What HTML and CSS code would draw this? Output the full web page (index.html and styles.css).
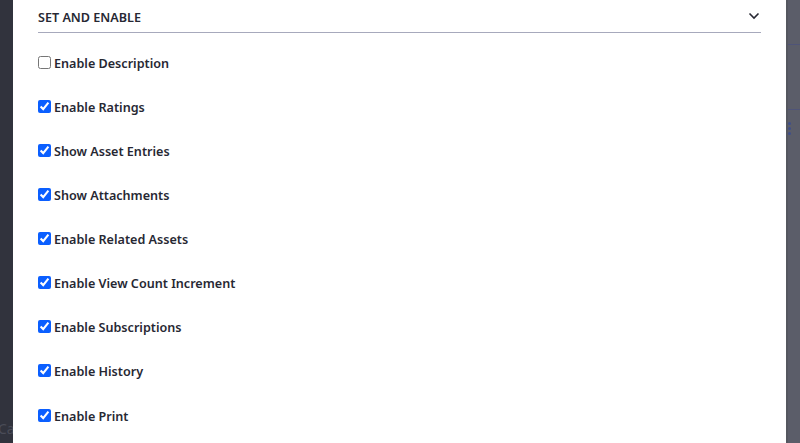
FILE: index.html
```html
<!DOCTYPE html>
<html>
<head>
<meta charset="utf-8">
<link rel="stylesheet" href="styles.css">
</head>
<body>
<div class="page">
  <div class="backdrop-left"><span class="ghost">Ca</span></div>
  <div class="modal">
    <div class="panel-header">
      <span class="panel-title">SET AND ENABLE</span>
      <svg class="chevron" width="12" height="8" viewBox="0 0 12 8"><path d="M1.5 1.5 L6 6 L10.5 1.5" fill="none" stroke="#272833" stroke-width="1.6"/></svg>
    </div>
    <div class="options">
      <label class="option"><input type="checkbox"><span>Enable Description</span></label>
      <label class="option"><input type="checkbox" checked><span>Enable Ratings</span></label>
      <label class="option"><input type="checkbox" checked><span>Show Asset Entries</span></label>
      <label class="option"><input type="checkbox" checked><span>Show Attachments</span></label>
      <label class="option"><input type="checkbox" checked><span>Enable Related Assets</span></label>
      <label class="option"><input type="checkbox" checked><span>Enable View Count Increment</span></label>
      <label class="option"><input type="checkbox" checked><span>Enable Subscriptions</span></label>
      <label class="option"><input type="checkbox" checked><span>Enable History</span></label>
      <label class="option"><input type="checkbox" checked><span>Enable Print</span></label>
    </div>
  </div>
  <div class="backdrop-right">
    <div class="bg-row bg-row-top"></div>
    <div class="bg-row bg-row-mid"></div>
    <div class="kebab"><i></i><i></i><i></i></div>
  </div>
</div>
</body>
</html>
```

FILE: styles.css
```css
html, body {
  margin: 0;
  padding: 0;
  height: 100%;
  overflow: hidden;
}
body {
  font-family: "Noto Sans", "Open Sans", sans-serif;
  color: #272833;
}
.page {
  display: flex;
  height: 443px;
}
.backdrop-left {
  width: 13px;
  flex: none;
  background: #31333d;
  position: relative;
  overflow: hidden;
}
.ghost {
  position: absolute;
  left: -2px;
  top: 419px;
  font-size: 14px;
  color: #4a4c57;
}
.modal {
  flex: 1;
  background: #ffffff;
  padding: 0 25px;
}
.panel-header {
  height: 32px;
  border-bottom: 1px solid #a7a9bc;
  display: flex;
  align-items: center;
  justify-content: space-between;
  padding-right: 1px;
}
.panel-title {
  font-size: 12.6px;
  font-weight: 600;
  margin-top: 2px;
}
.chevron {
  margin-top: -1px;
}
.options {
  display: flex;
  flex-direction: column;
  padding-top: 20px;
  gap: 24.13px;
}
.option {
  display: flex;
  align-items: center;
  height: 20px;
  font-size: 12.6px;
  font-weight: 600;
}
.option input {
  margin: 0 3px 0 0;
  width: 13px;
  height: 13px;
  accent-color: #0b5fff;
  position: relative;
  top: -1px;
}
.backdrop-right {
  width: 14px;
  flex: none;
  background: #5b5d69;
  border-left: 2px solid #55575f;
  box-sizing: border-box;
  display: flex;
  flex-direction: column;
}
.bg-row {
  border-bottom: 1px solid #4f5478;
}
.bg-row-top {
  height: 44px;
}
.bg-row-mid {
  height: 64px;
}
.kebab {
  display: flex;
  flex-direction: column;
  gap: 2px;
  padding-top: 12px;
}
.kebab i {
  width: 3px;
  height: 3px;
  border-radius: 50%;
  background: #3f4f8a;
}
```
